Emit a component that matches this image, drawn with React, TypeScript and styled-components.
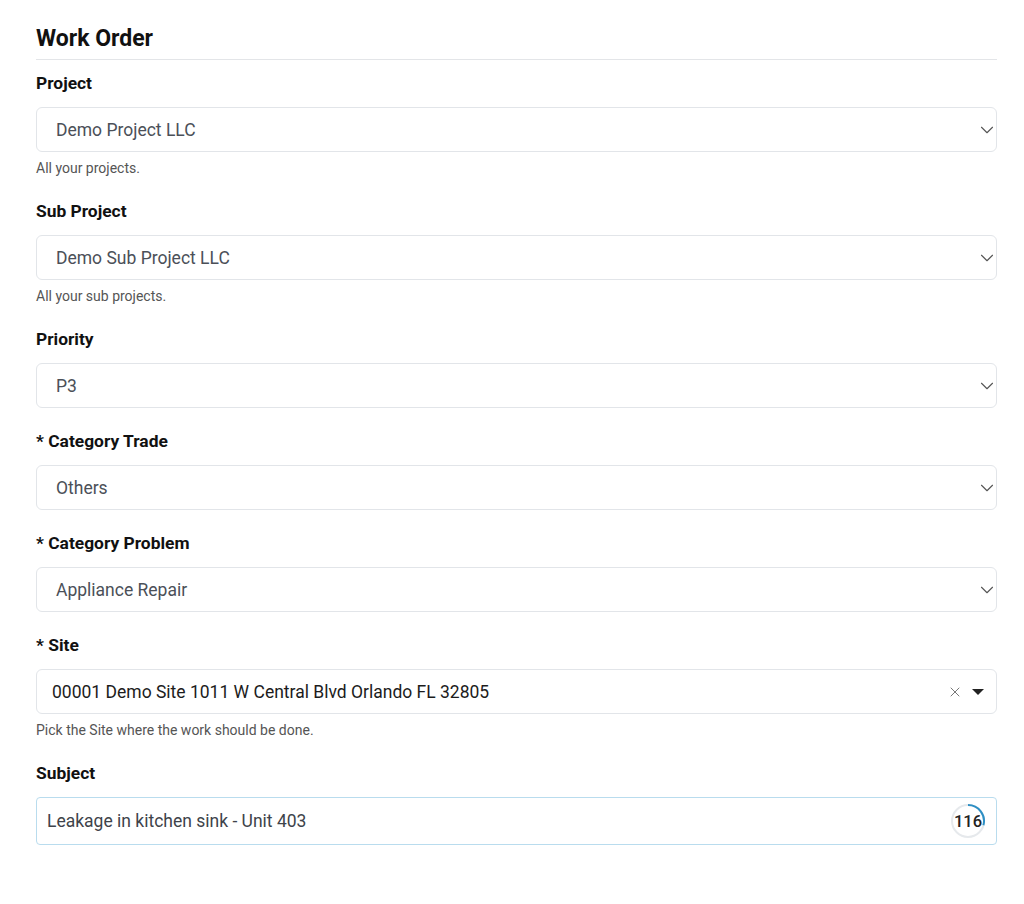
import React from "react";
import styled, { createGlobalStyle } from "styled-components";
import { ChevronDown, X } from "lucide-react";

const GlobalStyle = createGlobalStyle`
  body {
    margin: 0;
    background: #ffffff;
    font-family: Roboto, "Liberation Sans", Arial, sans-serif;
    color: #111;
  }
`;

const Page = styled.div`
  padding: 24px 27px 40px 36px;
`;

const Title = styled.h2`
  margin: 0 0 13px;
  padding-bottom: 6px;
  font-size: 23px;
  line-height: 29px;
  font-weight: 700;
  color: #111;
  border-bottom: 1px solid #e3e5e8;
`;

const Field = styled.div`
  margin-bottom: 23px;
`;

const Label = styled.div`
  font-size: 17.4px;
  line-height: 20px;
  font-weight: 700;
  color: #111;
  margin-bottom: 14px;
`;

const SelectBox = styled.div<{ $dark?: boolean }>`
  display: flex;
  align-items: center;
  height: 45px;
  box-sizing: border-box;
  border: 1px solid #e2e5e9;
  border-radius: 6px;
  padding: 0 ${(p) => (p.$dark ? "10px" : "0")} 0 ${(p) => (p.$dark ? "15px" : "19px")};
  font-size: 17.5px;
  color: ${(p) => (p.$dark ? "#1c1c1c" : "#4b5058")};
  background: #fff;
`;

const Value = styled.span`
  flex: 1;
`;

const Chevron = styled(ChevronDown)`
  margin-right: -2px;
  color: #555;
`;

const Helper = styled.div`
  margin-top: 6px;
  font-size: 14px;
  line-height: 20px;
  color: #555;
`;

const Indicators = styled.div`
  display: flex;
  align-items: center;
  gap: 9px;
  color: #777;
`;

const Caret = styled.span`
  width: 0;
  height: 0;
  border-left: 6px solid transparent;
  border-right: 6px solid transparent;
  border-top: 6px solid #222;
  margin-right: 2px;
`;

const SubjectBox = styled.div`
  display: flex;
  align-items: center;
  height: 48px;
  box-sizing: border-box;
  border: 1px solid #b9dcee;
  border-radius: 4px;
  padding: 0 10px 0 10px;
  font-size: 17.5px;
  color: #3e434a;
`;

const Counter = styled.div`
  position: relative;
  width: 36px;
  height: 36px;
  display: flex;
  align-items: center;
  justify-content: center;
  font-size: 16.5px;
  font-weight: 500;
  color: #222;
  svg {
    position: absolute;
    inset: 0;
  }
`;

const CounterText = styled.span`
  position: relative;
`;

const selects = [
  { label: "Project", value: "Demo Project LLC", helper: "All your projects." },
  { label: "Sub Project", value: "Demo Sub Project LLC", helper: "All your sub projects." },
  { label: "Priority", value: "P3" },
  { label: "* Category Trade", value: "Others" },
  { label: "* Category Problem", value: "Appliance Repair" },
];

export default function App() {
  return (
    <>
      <GlobalStyle />
      <Page>
        <Title>Work Order</Title>
        {selects.map((s) => (
          <Field key={s.label}>
            <Label>{s.label}</Label>
            <SelectBox>
              <Value>{s.value}</Value>
              <Chevron size={22} strokeWidth={1.2} />
            </SelectBox>
            {s.helper && <Helper>{s.helper}</Helper>}
          </Field>
        ))}
        <Field>
          <Label>* Site</Label>
          <SelectBox $dark>
            <Value>00001 Demo Site 1011 W Central Blvd Orlando FL 32805</Value>
            <Indicators>
              <X size={16} strokeWidth={1.5} />
              <Caret />
            </Indicators>
          </SelectBox>
          <Helper>Pick the Site where the work should be done.</Helper>
        </Field>
        <Field>
          <Label>Subject</Label>
          <SubjectBox>
            <Value>Leakage in kitchen sink - Unit 403</Value>
            <Counter>
              <svg width="36" height="36" viewBox="0 0 36 36">
                <circle cx="18" cy="18" r="16" fill="none" stroke="#e6e9ec" strokeWidth="2" />
                <path d="M18 2 A16 16 0 0 1 33.4 22.3" fill="none" stroke="#2d8fc4" strokeWidth="2" />
              </svg>
              <CounterText>116</CounterText>
            </Counter>
          </SubjectBox>
        </Field>
      </Page>
    </>
  );
}
